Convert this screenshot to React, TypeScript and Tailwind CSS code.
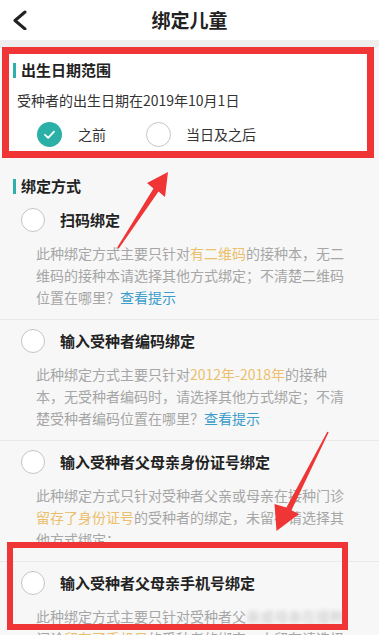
import React from "react"

type Part = { t: string; c?: "hl" | "link" | "blur" }

interface Method {
    title: string
    lines: Part[][]
}

const methods: Method[] = [
    {
        title: "扫码绑定",
        lines: [
            [{ t: "此种绑定方式主要只针对" }, { t: "有二维码", c: "hl" }, { t: "的接种本，无二" }],
            [{ t: "维码的接种本请选择其他方式绑定；不清楚二维码" }],
            [{ t: "位置在哪里？" }, { t: "查看提示", c: "link" }],
        ],
    },
    {
        title: "输入受种者编码绑定",
        lines: [
            [{ t: "此种绑定方式主要只针对" }, { t: "2012年-2018年", c: "hl" }, { t: "的接种" }],
            [{ t: "本，无受种者编码时，请选择其他方式绑定；不清" }],
            [{ t: "楚受种者编码位置在哪里？" }, { t: "查看提示", c: "link" }],
        ],
    },
    {
        title: "输入受种者父母亲身份证号绑定",
        lines: [
            [{ t: "此种绑定方式只针对受种者父亲或母亲在接种门诊" }],
            [{ t: "留存了身份证号", c: "hl" }, { t: "的受种者的绑定，未留存请选择其" }],
            [{ t: "他方式绑定；" }],
        ],
    },
    {
        title: "输入受种者父母亲手机号绑定",
        lines: [
            [{ t: "此种绑定方式主要只针对受种者父" }, { t: "亲或母亲在接种", c: "blur" }],
            [{ t: "门诊" }, { t: "留存了手机号", c: "hl" }, { t: "的受种者的绑定，未留存请选择" }],
            [{ t: "其他方式绑定；" }],
        ],
    },
]

function partClass(c?: Part["c"]) {
    if (c === "hl") return "text-[#ebbf6c]"
    if (c === "link") return "text-[#3a9dcb]"
    if (c === "blur") return "blur-[2px] opacity-60"
    return ""
}

function SectionTitle({ text }: { text: string }) {
    return (
        <div className="flex items-center h-[22px]">
            <div className="w-[3px] h-[15px] bg-[#2fb0aa]" />
            <span className="ml-[5px] text-[15px] leading-[22px] font-bold text-[#222]">{text}</span>
        </div>
    )
}

export default function App() {
    return (
        <div className="relative w-[379px] h-[635px] overflow-hidden bg-[#f7f7f7] [font-family:'Noto_Sans_CJK_SC','Noto_Sans',sans-serif]">
            {/* Header */}
            <div className="grid grid-cols-[40px_1fr_40px] items-center h-[40px] bg-white">
                <svg className="ml-[12px]" width="16" height="20" viewBox="0 0 16 20" fill="none">
                    <polyline points="13,2 3,10.5 13,19" stroke="#222" strokeWidth="3" strokeLinecap="round" strokeLinejoin="round" />
                </svg>
                <div className="text-center text-[19px] font-semibold text-[#222]">绑定儿童</div>
                <div />
            </div>
            <div className="h-[7px] bg-[#eeeeee]" />

            {/* 出生日期范围 */}
            <div className="ml-[2px] mr-[5px] border-[7px] border-[#ef3535] bg-white pb-[4px]">
                <div className="pl-[4px] pt-[5px]">
                    <SectionTitle text="出生日期范围" />
                </div>
                <div className="pl-[8px] mt-[8px] text-[14px] leading-[22px] text-[#333]">
                    受种者的出生日期在2019年10月1日
                </div>
                <div className="mt-[11px] pl-[28px] flex items-center h-[25px] text-[14px] text-[#333]">
                    <div className="w-[25px] h-[25px] rounded-full bg-[#2bb0a8] flex items-center justify-center">
                        <svg width="25" height="25" viewBox="0 0 25 25" fill="none">
                            <path d="M8 12.8 L11.2 15.8 L17 9.6" stroke="#fff" strokeWidth="1.8" strokeLinecap="round" strokeLinejoin="round" />
                        </svg>
                    </div>
                    <span className="ml-[16px]">之前</span>
                    <div className="ml-[40px] w-[25px] h-[25px] rounded-full border border-[#c6c6c6] bg-white" />
                    <span className="ml-[15px]">当日及之后</span>
                </div>
            </div>

            {/* 绑定方式 */}
            <div className="mt-[17px] pl-[13px]">
                <SectionTitle text="绑定方式" />
            </div>
            <div className="mt-[2px]">
                {methods.map((m) => (
                    <div key={m.title} className="border-b border-[#e9e9e9] pt-[9px] pb-[11px]">
                        <div className="flex items-center h-[24px] pl-[21px]">
                            <div className="w-[24px] h-[24px] rounded-full border border-[#c4c4c4] bg-white" />
                            <span className="ml-[15px] text-[15px] font-bold text-[#222]">{m.title}</span>
                        </div>
                        <p className="mt-[10px] pl-[36px] text-[14px] leading-[22px] text-[#a6a6a6] whitespace-nowrap">
                            {m.lines.map((line, i) => (
                                <React.Fragment key={i}>
                                    {line.map((p, j) => (
                                        <span key={j} className={partClass(p.c)}>{p.t}</span>
                                    ))}
                                    {i < m.lines.length - 1 && <br />}
                                </React.Fragment>
                            ))}
                        </p>
                    </div>
                ))}
            </div>

            {/* Annotations */}
            <div className="absolute left-[7px] top-[542px] w-[341px] h-[88px] border-[6px] border-[#ef3535] pointer-events-none" />
            <svg className="absolute left-0 top-0 pointer-events-none" width="379" height="635" viewBox="0 0 379 635">
                <polygon
                    fill="#ef3535"
                    points="117.2,247.5 153.5,188.4 147,183 168,172 165,197 158.5,191.6 118.8,248.5"
                />
                <polygon
                    fill="#ef3535"
                    points="327.3,431.7 286.4,507.6 274.5,504 276.5,531 299,514 291.5,510.2 328.7,432.3"
                />
            </svg>
        </div>
    )
}
